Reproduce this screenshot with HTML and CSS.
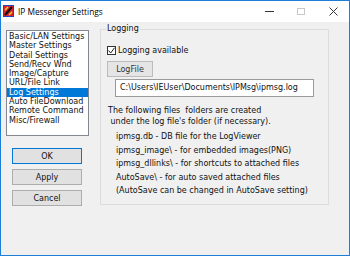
FILE: index.html
```html
<!DOCTYPE html>
<html lang="en">
<head>
  <meta charset="UTF-8"/>
  <title>IP Messenger Settings</title>
  <link rel="stylesheet" href="styles.css">
</head>
<body>

  <div class="window">

    <!-- title bar -->
    <div class="titlebar">
      <svg class="app-icon" width="11" height="12" viewBox="0 0 11 12">
        <rect x="0.5" y="0.5" width="10" height="11" fill="#d8262a" stroke="#2845b8"/>
        <path d="M2 10 L9 2" stroke="#111" stroke-width="2"/>
        <path d="M2 5 L5 2" stroke="#f6d530" stroke-width="1.2"/>
        <path d="M6 10 L9 7" stroke="#f6d530" stroke-width="1.2"/>
      </svg>
      <span class="title">IP Messenger Settings</span>
      <div class="controls">
        <span class="ctl"><span class="min"></span></span>
        <span class="ctl"><span class="max"></span></span>
        <span class="ctl">
          <svg width="9" height="9" viewBox="0 0 9 9">
            <path d="M0.5 0.5 L8.5 8.5 M8.5 0.5 L0.5 8.5" stroke="#333" stroke-width="1"/>
          </svg>
        </span>
      </div>
    </div>

    <div class="content">

      <!-- category list + buttons -->
      <div class="side">
        <ul class="list">
          <li>Basic/LAN Settings</li>
          <li>Master Settings</li>
          <li>Detail Settings</li>
          <li>Send/Recv Wnd</li>
          <li>Image/Capture</li>
          <li>URL/File Link</li>
          <li class="selected">Log Settings</li>
          <li>Auto FileDownload</li>
          <li>Remote Command</li>
          <li>Misc/Firewall</li>
        </ul>
        <div class="buttons">
          <button class="btn default">OK</button>
          <button class="btn">Apply</button>
          <button class="btn">Cancel</button>
        </div>
      </div>

      <!-- log settings page -->
      <fieldset class="group">
        <legend>Logging</legend>
        <label class="check">
          <span class="box">
            <svg width="7" height="7" viewBox="0 0 7 7">
              <path d="M0.5 3.5 L2.7 6 L6.5 0.8" fill="none" stroke="#222" stroke-width="1"/>
            </svg>
          </span>
          Logging available
        </label>
        <button class="btn logfile">LogFile</button>
        <div class="path">C:\Users\IEUser\Documents\IPMsg\ipmsg.log</div>
        <p class="note">The following files  folders are created
 under the log file's folder (if necessary).</p>
        <ul class="files">
          <li>ipmsg.db - DB file for the LogViewer</li>
          <li>ipmsg_image\ - for embedded images(PNG)</li>
          <li>ipmsg_dllinks\ - for shortcuts to attached files</li>
          <li>AutoSave\ - for auto saved attached files</li>
          <li>(AutoSave can be changed in AutoSave setting)</li>
        </ul>
      </fieldset>

    </div>
  </div>

</body>
</html>
```

FILE: styles.css
```css
* {
  margin: 0; padding: 0;
  box-sizing: border-box;
}

body {
  font-family: "DejaVu Sans", sans-serif;
  font-size: 8px;
  color: #111;
  background: #f0f0f0;
}

.window {
  width: 350px;
  height: 256px;
  border: 1px solid #1c7ed6;
  background: #f0f0f0;
  display: flex;
  flex-direction: column;
}

/* title bar */
.titlebar {
  height: 21px;
  background: #fff;
  display: flex;
  align-items: center;
  padding-left: 2px;
}

.app-icon {
  display: block;
  margin-top: -1px;
}

.title {
  font-family: "Open Sans", sans-serif;
  font-size: 8.3px;
  color: #000;
  margin-left: 4px;
}

.controls {
  margin-left: auto;
  display: flex;
  align-items: center;
  height: 100%;
}

.ctl {
  width: 32px;
  height: 100%;
  display: flex;
  align-items: center;
  justify-content: center;
}

.min {
  width: 9px;
  height: 1px;
  background: #333;
}

.max {
  width: 8px;
  height: 7px;
  border: 1px solid #c8c8c8;
}

/* main area */
.content {
  flex: 1;
  display: flex;
  align-items: flex-start;
  padding-left: 5px;
  gap: 11px;
}

.side {
  width: 83px;
  padding-top: 8px;
}

.list {
  list-style: none;
  height: 106px;
  background: #fff;
  border: 1px solid #828790;
  padding-top: 1px;
}

.list li {
  line-height: 9.3px;
  height: 9.3px;
  padding-left: 2px;
  white-space: nowrap;
}

.list li.selected {
  background: #0078d7;
  color: #fff;
}

.buttons {
  display: flex;
  flex-direction: column;
  gap: 5px;
  margin: 12px 0 0 6px;
}

.btn {
  font-family: "DejaVu Sans", sans-serif;
  font-size: 8px;
  color: #111;
  width: 70px;
  height: 16px;
  background: #e1e1e1;
  border: 1px solid #adadad;
}

.btn.default {
  border-color: #0078d7;
}

/* group box */
.group {
  width: 229px;
  height: 181px;
  margin-top: 2px;
  border: 1px solid #dcdcdc;
  padding: 0 0 0 6px;
}

.group legend {
  line-height: 10px;
  margin-left: -1px;
  padding: 0 1px;
}

.check {
  display: flex;
  align-items: center;
  height: 10px;
  margin-top: 11px;
  gap: 2px;
}

.check .box {
  width: 9px;
  height: 9px;
  border: 1px solid #333;
  background: #fff;
  display: flex;
  align-items: center;
  justify-content: center;
}

.check .box svg {
  display: block;
}

.btn.logfile {
  display: block;
  width: 46px;
  margin-top: 6px;
  color: #333;
  background: #e5e5e5;
  border-color: #bcbcbc;
}

.path {
  width: 199px;
  height: 18px;
  margin: 2px 0 0 8px;
  background: #fff;
  border: 1px solid #9a9a9a;
  line-height: 16px;
  padding-left: 4px;
  white-space: nowrap;
}

.note {
  white-space: pre;
  line-height: 11px;
  margin-top: 8px;
  padding-left: 1px;
}

.files {
  list-style: none;
  margin-top: 3px;
  padding-left: 9px;
}

.files li {
  line-height: 13.5px;
  white-space: nowrap;
}
```
